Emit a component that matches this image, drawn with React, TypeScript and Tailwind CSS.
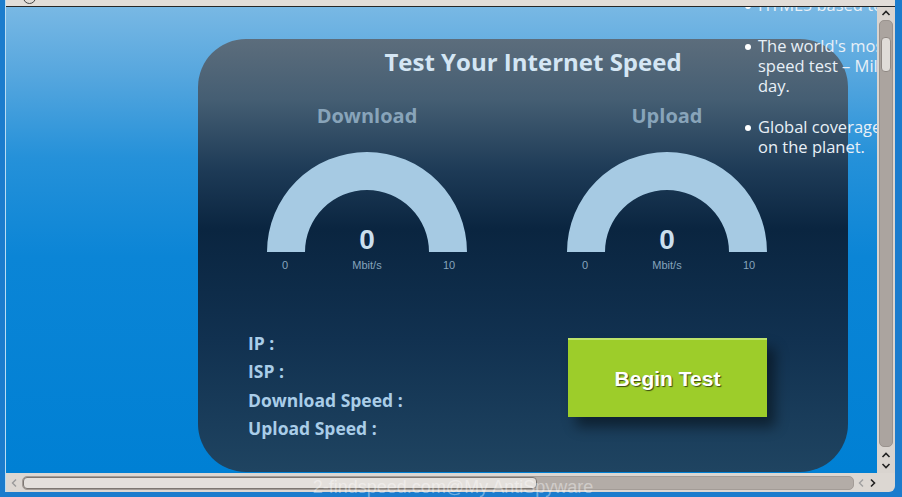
import React from 'react';

const Gauge = ({ label }: { label: string }) => {
  return (
    <div className="w-[200px] flex flex-col items-center">
      <div className="h-[26px] leading-[26px] text-[20px] font-bold text-[#88a4ba]">{label}</div>
      {/* Half ring */}
      <div className="relative w-[200px] h-[100px] mt-[23px]">
        <svg width="200" height="100" viewBox="0 0 200 100">
          <path d="M0,100 A100,100 0 0 1 200,100 L162,100 A62,62 0 0 0 38,100 Z" fill="#a6cae3" />
        </svg>
        <div className="absolute left-0 right-0 bottom-[-3px] text-center text-[28px] leading-[30px] font-bold text-[#cadfee] font-['Liberation_Sans',sans-serif]">
          0
        </div>
      </div>
      <div className="w-[204px] flex justify-between mt-[6px] text-[11px] leading-[14px] text-[#86a4bc] font-['Liberation_Sans',sans-serif]">
        <span className="w-[40px] text-center">0</span>
        <span className="w-[40px] text-center">Mbit/s</span>
        <span className="w-[40px] text-center">10</span>
      </div>
    </div>
  );
};

const App = () => {
  return (
    <div className="w-[902px] h-[497px] relative overflow-hidden bg-[#1b7ccd] font-['Open_Sans',sans-serif]">
      {/* Window frame */}
      <div className="ml-[5px] w-[890px] h-[492px] bg-[#dcd7d2] border-l border-[#b9dcf3] rounded-br-[6px] flex flex-col">
        {/* Top strip */}
        <div className="h-[7px] bg-[#e2ddd8] border-b border-[#262626] overflow-hidden">
          <div className="ml-[17px] mt-[-9px] w-[13px] h-[13px] rounded-full border border-[#444]" />
        </div>

        <div className="flex h-[466px]">
          {/* Page content */}
          <div className="relative w-[871px] h-[466px] overflow-hidden bg-[linear-gradient(180deg,#78b8e4_0px,#55a6de_70px,#2591d9_150px,#0b85d6_250px,#0080d4_466px)]">
            <div className="ml-[192px] mt-[32px] w-[650px] h-[433px] rounded-[48px] bg-[linear-gradient(180deg,#5c6d7c_0px,#455e73_60px,#1e3b57_130px,#0a2540_190px,#113150_300px,#1f4461_433px)] flex flex-col">
              <h1 className="pt-[8px] pl-[20px] text-center text-[24px] leading-[30px] font-bold text-[#d4e6f4]">
                Test Your Internet Speed
              </h1>

              {/* Gauges */}
              <div className="flex pl-[69px] gap-[100px] mt-[26px]">
                <Gauge label="Download" />
                <Gauge label="Upload" />
              </div>

              {/* Results + button */}
              <div className="flex mt-[57px]">
                <div className="pl-[50px] w-[370px] text-[17.5px] leading-[28.3px] font-bold text-[#a9cde8]">
                  <div>IP :</div>
                  <div>ISP :</div>
                  <div>Download Speed :</div>
                  <div>Upload Speed :</div>
                </div>
                <button className="mt-[9px] w-[199px] h-[79px] bg-[#9dcd2a] border-t-2 border-[#bde36a] shadow-[8px_10px_12px_rgba(0,0,0,0.45)] text-white text-[21px] font-bold font-['Liberation_Sans',sans-serif] [text-shadow:1px_1px_1px_#3a4a10]">
                  Begin Test
                </button>
              </div>
            </div>

            {/* Feature list, overlapping the card */}
            <ul className="absolute left-[739px] top-[-12px] text-[16.5px] leading-[20px] text-[#e8f0f7] whitespace-nowrap flex flex-col gap-[21px]">
              <li className="flex">
                <span className="w-[13px] mt-[8px]"><span className="block w-[6px] h-[6px] rounded-full bg-white" /></span>
                <span>HTML5 based test</span>
              </li>
              <li className="flex">
                <span className="w-[13px] mt-[8px]"><span className="block w-[6px] h-[6px] rounded-full bg-white" /></span>
                <span>
                  The world's most accurate
                  <br />
                  speed test – Millions of tests a
                  <br />
                  day.
                </span>
              </li>
              <li className="flex">
                <span className="w-[13px] mt-[8px]"><span className="block w-[6px] h-[6px] rounded-full bg-white" /></span>
                <span>
                  Global coverage with servers
                  <br />
                  on the planet.
                </span>
              </li>
            </ul>
          </div>

          {/* Vertical scrollbar */}
          <div className="w-[18px] h-[466px] bg-[#d9d4cf] flex flex-col items-center">
            <svg width="10" height="8" viewBox="0 0 10 8" className="mt-[2px]">
              <path d="M1.5,6 L5,2.5 L8.5,6" fill="none" stroke="#222" strokeWidth="1.6" />
            </svg>
            <div className="mt-[3px] w-[14px] h-[427px] rounded-[5px] bg-[#aba49f] border border-[#9a938e] flex justify-center">
              <div className="mt-[16px] w-[10px] h-[35px] rounded-[4px] bg-[#e0dcd8] border border-[#8f8883]" />
            </div>
            <svg width="10" height="8" viewBox="0 0 10 8" className="mt-[4px]">
              <path d="M1.5,6 L5,2.5 L8.5,6" fill="none" stroke="#222" strokeWidth="1.6" />
            </svg>
            <svg width="10" height="8" viewBox="0 0 10 8" className="mt-[3px]">
              <path d="M1.5,2 L5,5.5 L8.5,2" fill="none" stroke="#222" strokeWidth="1.6" />
            </svg>
          </div>
        </div>

        {/* Horizontal scrollbar */}
        <div className="h-[19px] flex items-center">
          <svg width="8" height="10" viewBox="0 0 8 10" className="ml-[4px]">
            <path d="M6,1.5 L2.5,5 L6,8.5" fill="none" stroke="#9a9a9a" strokeWidth="1.4" />
          </svg>
          <div className="ml-[4px] w-[832px] h-[14px] rounded-[5px] bg-[#b3aca7] border border-[#a39c97] flex">
            <div className="w-[514px] h-[12px] rounded-[4px] bg-[#e4e0dc] border border-[#7d7772]" />
          </div>
          <svg width="8" height="10" viewBox="0 0 8 10" className="ml-[3px]">
            <path d="M6,1.5 L2.5,5 L6,8.5" fill="none" stroke="#a0a0a0" strokeWidth="1.4" />
          </svg>
          <svg width="8" height="10" viewBox="0 0 8 10" className="ml-[4px]">
            <path d="M2,1.5 L5.5,5 L2,8.5" fill="none" stroke="#222" strokeWidth="1.6" />
          </svg>
        </div>
      </div>

      {/* Watermark */}
      <div className="absolute left-0 right-0 top-[476px] text-center pl-[4px] text-[18px] leading-[22px] text-white/40 font-['Liberation_Sans',sans-serif]">
        2-findspeed.com@My AntiSpyware
      </div>
    </div>
  );
};

export default App;
